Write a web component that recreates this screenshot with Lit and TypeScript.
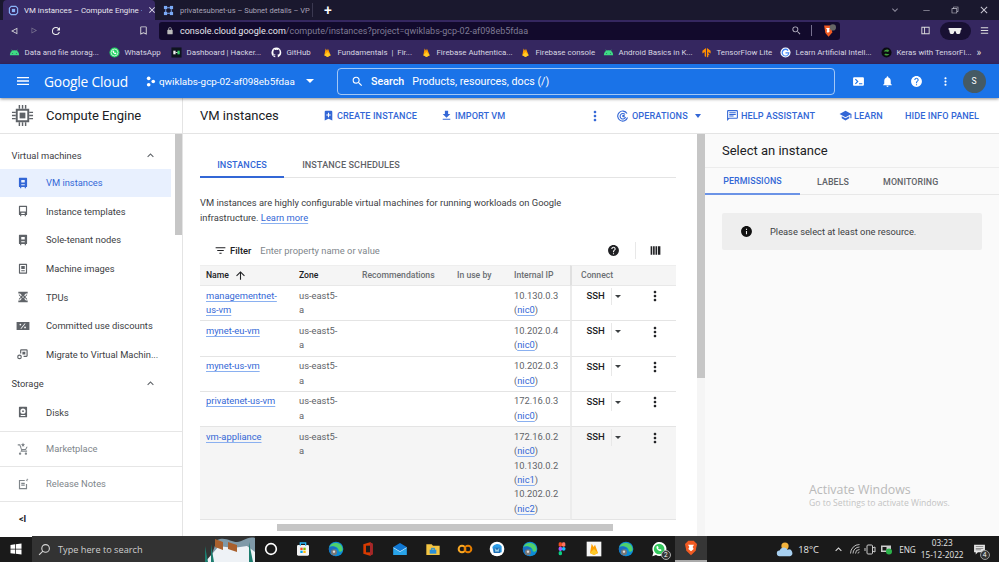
import { LitElement, html, css, svg } from "lit";
import { customElement } from "lit/decorators.js";

const ic = (d: string, size = 12, color = "currentColor", vb = "0 0 24 24") =>
  html`<svg class="ic" width=${size} height=${size} viewBox=${vb} fill=${color}><path d=${d}></path></svg>`;

const P = {
  menu: "M3 18h18v-2H3v2zm0-5h18v-2H3v2zm0-7v2h18V6H3z",
  search: "M15.5 14h-.79l-.28-.27A6.47 6.47 0 0 0 16 9.5 6.5 6.5 0 1 0 9.5 16c1.61 0 3.09-.59 4.23-1.57l.27.28v.79l5 4.99L20.49 19l-4.99-5zm-6 0C7.01 14 5 11.99 5 9.5S7.01 5 9.5 5 14 7.01 14 9.5 11.99 14 9.5 14z",
  bell: "M12 22c1.1 0 2-.9 2-2h-4c0 1.1.9 2 2 2zm6-6v-5c0-3.07-1.63-5.64-4.5-6.32V4c0-.83-.67-1.5-1.5-1.5s-1.5.67-1.5 1.5v.68C7.64 5.36 6 7.92 6 11v5l-2 2v1h16v-1l-2-2z",
  help: "M12 2C6.48 2 2 6.48 2 12s4.48 10 10 10 10-4.48 10-10S17.52 2 12 2zm1 17h-2v-2h2v2zm2.07-7.75-.9.92C13.45 12.9 13 13.5 13 15h-2v-.5c0-1.1.45-2.1 1.17-2.83l1.24-1.26c.37-.36.59-.86.59-1.41 0-1.1-.9-2-2-2s-2 .9-2 2H8c0-2.21 1.79-4 4-4s4 1.79 4 4c0 .88-.36 1.68-.93 2.25z",
  dots: "M12 8c1.1 0 2-.9 2-2s-.9-2-2-2-2 .9-2 2 .9 2 2 2zm0 2c-1.1 0-2 .9-2 2s.9 2 2 2 2-.9 2-2-.9-2-2-2zm0 6c-1.1 0-2 .9-2 2s.9 2 2 2 2-.9 2-2-.9-2-2-2z",
  term: "M20 4H4a2 2 0 0 0-2 2v12c0 1.1.9 2 2 2h16a2 2 0 0 0 2-2V6a2 2 0 0 0-2-2zM5.5 8.5 7 7l5 5-5 5-1.5-1.5L9 12 5.5 8.5zM19 17h-6v-2h6v2z",
  create: "M17 3H7a2 2 0 0 0-2 2v16l7-3 7 3V5a2 2 0 0 0-2-2zm-1 9h-3v3h-2v-3H8v-2h3V7h2v3h3v2z",
  importI: "M5 20h14v-2H5v2zM19 9h-4V3H9v6H5l7 7 7-7z",
  chat: "M20 2H4a2 2 0 0 0-2 2v18l4-4h14a2 2 0 0 0 2-2V4a2 2 0 0 0-2-2zm0 14H5.2L4 17.2V4h16v12zM6 12h8v2H6zm0-3h12v2H6zm0-3h12v2H6z",
  school: "M5 13.18v4L12 21l7-3.82v-4L12 17l-7-3.82zM12 3 1 9l11 6 9-4.91V17h2V9L12 3z",
  filter: "M3 6h18v2H3zm3 5h12v2H6zm4 5h4v2h-4z",
  up: "M4 12l1.41 1.41L11 7.83V20h2V7.83l5.58 5.59L20 12l-8-8-8 8z",
  columns: "M3 4h3v16H3zm4.5 0h3v16h-3zm4.5 0h3v16h-3zm4.5 0H21v16h-4.5z",
  info: "M12 2C6.48 2 2 6.48 2 12s4.48 10 10 10 10-4.48 10-10S17.52 2 12 2zm1 15h-2v-6h2v6zm0-8h-2V7h2v2z",
  server: "M6 3h12a1 1 0 0 1 1 1v14a1 1 0 0 1-1 1h-1v2h-2v-2H9v2H7v-2H6a1 1 0 0 1-1-1V4a1 1 0 0 1 1-1zm3 4v4h6V7H9zm0 7v2h6v-2H9z",
  template: "M6 3h12a1 1 0 0 1 1 1v14a1 1 0 0 1-1 1h-1v2h-2v-2H9v2H7v-2H6a1 1 0 0 1-1-1V4a1 1 0 0 1 1-1zm1 2v8h10V5H7zm2 10v2h6v-2H9z",
  image: "M6 3h12a1 1 0 0 1 1 1v15a1 1 0 0 1-1 1H6a1 1 0 0 1-1-1V4a1 1 0 0 1 1-1zm1 2v13h10V5H7zm2 2h6v5H9V7zm0 7h6v2H9v-2z",
  tpu: "M4 3h16v3h-3l-3 3 1.500 1.500L19 7v2l-3 3 3 3v2l-3.500-3.500L14 15l3 3h3v3H4v-3h3l3-3-1.500-1.500L5 17v-2l3-3-3-3V7l3.500 3.500L10 9 7 6H4zm8 7.500L10.500 12l1.500 1.500 1.500-1.500z",
  pct: "M1 5h22v14H1V5zm6.500 3A1.500 1.500 0 1 0 7.500 11 1.500 1.500 0 0 0 7.500 8zm7.300-.5L7.500 16.500h1.700l7.300-9h-1.700zM15.500 13a1.500 1.500 0 1 0 0 3 1.500 1.500 0 0 0 0-3z",
  migrate: "M9 4h9a2 2 0 0 1 2 2v9a2 2 0 0 1-2 2h-5v-2h5V6H9v5H7V6a2 2 0 0 1 2-2zm2 4h5v5h-5V8zM6 13a4 4 0 1 1 0 8 4 4 0 0 1 0-8zm0 2a2 2 0 1 0 0 4 2 2 0 0 0 0-4z",
  disk: "M6 3h12a1 1 0 0 1 1 1v16a1 1 0 0 1-1 1H6a1 1 0 0 1-1-1V4a1 1 0 0 1 1-1zm6 3a4.500 4.500 0 1 0 0 9 4.500 4.500 0 0 0 0-9zm0 3a1.500 1.500 0 1 1 0 3 1.500 1.500 0 0 1 0-3zM8 17v2h8v-2H8z",
  cart: "M7 18c-1.100 0-2 .9-2 2s.9 2 2 2 2-.9 2-2-.9-2-2-2zm10 0c-1.100 0-2 .9-2 2s.9 2 2 2 2-.9 2-2-.9-2-2-2zM3 6h3l3 8-1.500 2.500H19v-1.800H10.500l.6-1H17L20 8h-2l-2 3.900H10L7.200 4H3zm9-5 1 2.500 2.500.3-1.900 1.700.6 2.500L12 6.800 9.800 8l.6-2.500L8.500 3.800l2.500-.3L12 1z",
  notes: "M5 5h10v2H7v12h10v-7h2v9H5V5zm4 5h6v2H9v-2zm0 3h6v2H9v-2zm10-11 .8 1.700 1.700.8-1.700.8L19 8l-.8-1.700-1.700-.8 1.700-.8L19 2z",
  chevUp: "M7.41 15.41 12 10.83l4.59 4.58L18 14l-6-6-6 6z",
};

const navItems: [string, string, boolean?][] = [
  ["VM instances", P.server, true],
  ["Instance templates", P.template],
  ["Sole-tenant nodes", P.server],
  ["Machine images", P.image],
  ["TPUs", P.tpu],
  ["Committed use discounts", P.pct],
  ["Migrate to Virtual Machin...", P.migrate],
];

const rows: { n: string[]; hl?: boolean; ips: string[][] }[] = [
  { n: ["managementnet-", "us-vm"], ips: [["10.130.0.3", "nic0"]] },
  { n: ["mynet-eu-vm"], ips: [["10.202.0.4", "nic0"]] },
  { n: ["mynet-us-vm"], ips: [["10.202.0.3", "nic0"]] },
  { n: ["privatenet-us-vm"], ips: [["172.16.0.3", "nic0"]] },
  { n: ["vm-appliance"], hl: true, ips: [["172.16.0.2", "nic0"], ["10.130.0.2", "nic1"], ["10.202.0.2", "nic2"]] },
];

const android = svg`<path fill="#3ddc84" d="M2 17a10 10 0 0 1 20 0v1H2z"/><path stroke="#3ddc84" stroke-width="1.500" d="M6 6l2.500 4M18 6l-2.500 4"/><circle cx="8" cy="14" r="1" fill="#352760"/><circle cx="16" cy="14" r="1" fill="#352760"/>`;
const fire = svg`<path fill="#ffa000" d="M5 18 8 3l3 5 2-4 6 14-7 4z"/><path fill="#ffca28" d="M5 18 12 11l7 7-7 4z"/>`;

const bookmarks: [any, string, number][] = [
  [android, "Data and file storag...", 100],
  [svg`<circle cx="12" cy="12" r="11" fill="#25d366"/><circle cx="12" cy="12" r="7.500" fill="none" stroke="#fff" stroke-width="1.500"/><path fill="#fff" d="M8.500 7.500c-1.500 1.500-.8 4 1.500 6s4.500 2.800 6 1.200l-.4-1.700-2-.8-.8.8c-.8-.4-1.500-1.100-1.900-1.900l.8-.8-.8-2.300z"/>`, "WhatsApp", 62],
  [svg`<rect x="1" y="1" width="22" height="22" fill="#0e141e"/><rect x="5" y="8" width="5" height="8" fill="#eee"/><rect x="14" y="8" width="5" height="8" fill="#39d26b"/><rect x="10" y="11" width="4" height="2" fill="#eee"/>`, "Dashboard | Hacker...", 100],
  [svg`<path fill="#fff" d="M12 1a11 11 0 0 0-3.500 21.400c.5.100.8-.2.8-.5v-2.200c-3 .7-3.700-1.300-3.700-1.300-.5-1.300-1.200-1.600-1.200-1.600-1-.7.100-.7.100-.7 1.100.1 1.700 1.100 1.700 1.100 1 1.700 2.500 1.200 3.200.9.100-.7.400-1.200.7-1.500-2.400-.3-5-1.200-5-5.400 0-1.200.4-2.200 1.100-3-.1-.3-.5-1.400.1-2.900 0 0 .9-.3 3 1.100a10.300 10.300 0 0 1 5.500 0c2.100-1.400 3-1.100 3-1.100.6 1.500.2 2.600.1 2.900.7.800 1.100 1.800 1.100 3 0 4.200-2.600 5.100-5 5.400.4.300.8 1 .8 2v3c0 .3.2.6.8.5A11 11 0 0 0 12 1z"/>`, "GitHub", 51],
  [fire, "Fundamentals  |  Fir...", 99],
  [fire, "Firebase Authentica...", 99],
  [fire, "Firebase console", 83],
  [android, "Android Basics in K...", 98],
  [svg`<path fill="#ff8f00" d="M11 2v20l-3-2V11L3 14V8zM13 2l8 6v6l-5-3v3l2 1v3l-2-1v4l-3 2z"/>`, "TensorFlow Lite", 79],
  [svg`<circle cx="12" cy="12" r="11" fill="#fff"/><path fill="#4285f4" d="M17 9a6 6 0 1 0 1 5h-6v-2.500h8.500A8.500 8.500 0 1 1 18.500 6.500z"/>`, "Learn Artificial Intell...", 101],
  [svg`<circle cx="12" cy="12" r="11" fill="#0b0b12"/><path fill="#3f9d3a" d="M6 10c3-6 10-6 12-2l-3 3c-2-1-5-1-9-1zm12 5c-3 5-9 4-11 2l3-3c2 1 4 1 8 1z"/>`, "Keras with TensorFl...", 96],
];

const edge = (c: string) => svg`<circle cx="12" cy="12" r="11" fill="#0c8bd6"/><path d="M2 9a10.500 10.500 0 0 1 20 3.500c0 3.500-3.500 4.500-6 3 1-5.500-7-9.500-14-6.500z" fill="#4fd16c"/><path d="M2 9.500C6 7 12 8 14 12c-3-1-6 1-6 5 0 2 1 4 3 6C5 22 0 15 2 9.500z" fill="#1b6fc2"/><circle cx="9" cy="17" r="4.500" fill=${c}/><circle cx="9" cy="16" r="1.800" fill="#ddd"/>`;

const tb: any[] = [
  svg`<circle cx="12" cy="12" r="8" fill="none" stroke="#fff" stroke-width="2.500"/>`,
  svg`<rect x="3" y="6" width="18" height="16" rx="2" fill="#f3f3f3"/><path d="M8 7V3h8v4" fill="none" stroke="#29b6f6" stroke-width="2"/><rect x="8" y="10" width="3.500" height="3.500" fill="#f25022"/><rect x="12.500" y="10" width="3.500" height="3.500" fill="#7fba00"/><rect x="8" y="14.500" width="3.500" height="3.500" fill="#00a4ef"/><rect x="12.500" y="14.500" width="3.500" height="3.500" fill="#ffb900"/>`,
  edge("#777"),
  svg`<path d="M5 5 15 2l4 2v16l-4 2-10-3z" fill="#d83b01"/><path d="M9 7h6v10H9z" fill="#1c1c1c"/><path d="M15 2l4 2v16l-4 2z" fill="#a4262c"/>`,
  svg`<path d="M2 9 12 3l10 6v12H2z" fill="#0f78d4"/><path d="M2 10l10 6 10-6v11H2z" fill="#29a4e8"/><path d="M2 9.500l10 6 10-6v1l-10 6-10-6z" fill="#d5eefc"/>`,
  svg`<path d="M2 5h8l2 2h10v14H2z" fill="#f4c542"/><rect x="7" y="13" width="10" height="6" fill="#2a8fd8"/><rect x="10" y="11" width="4" height="3" fill="none" stroke="#2a8fd8" stroke-width="1.500"/>`,
  svg`<circle cx="7.500" cy="12" r="5" fill="none" stroke="#f9a825" stroke-width="3"/><circle cx="16.500" cy="12" r="5" fill="none" stroke="#e67e00" stroke-width="3"/>`,
  svg`<circle cx="12" cy="12" r="11" fill="#fff"/><path d="M5 9a8 8 0 0 1 14-1v9H7z" fill="#2e9ee8"/><path d="M7 10h10v8H7z" fill="#1f6fb5"/><path d="M9 11l1.500 5 1.500-3 1.500 3 1.500-5" fill="none" stroke="#dff" stroke-width="1"/>`,
  edge("#777"),
  svg`<rect x="7" y="2" width="5" height="6.500" rx="2.200" fill="#f24e1e"/><rect x="12" y="2" width="5" height="6.500" rx="2.200" fill="#ff7262"/><rect x="7" y="8.500" width="5" height="6.500" rx="2.200" fill="#a259ff"/><circle cx="14.500" cy="11.700" r="2.800" fill="#1abcfe"/><rect x="7" y="15" width="5" height="6.500" rx="2.500" fill="#0acf83"/>`,
  svg`<rect x="1" y="1" width="22" height="22" fill="#f6f6f6"/><path fill="#ffa000" d="M6 18 8.500 4l3 5 2-3.500L18 18l-6 3z"/><path fill="#ffca28" d="M6 18 12 12l6 6-6 3z"/>`,
  edge("#777"),
  svg`<path d="M2 23l1.600-5.800A10.500 10.500 0 1 1 7.500 21z" fill="#fff"/><circle cx="12.200" cy="12" r="8" fill="#35c95e"/><path fill="#fff" d="M9 7.500c-1.500 1.500-.8 4 1 5.800s4.300 2.500 5.700 1l-.4-1.600-2-.8-.8.8c-.8-.4-1.500-1.100-1.900-1.900l.8-.8-.8-2z"/>`,
  svg`<path d="M5 4l3-3h8l3 3 2 2-2 10-7 7-7-7-2-10z" fill="#f15a22"/><path d="M7.500 7h9l-2 3.500 1.500 3-4 3.500-4-3.500 1.500-3z" fill="#fff"/>`,
];

@customElement("app-root")
export class AppRoot extends LitElement {
  static styles = css`
    :host { display: block; width: 999px; height: 562px; overflow: hidden; position: relative; font-family: Roboto, "Liberation Sans", sans-serif; font-size: 9.35px; color: #3c4043; }
    * { box-sizing: border-box; }
    .ic { display: block; flex: none; }
    .page { height: 562px; display: flex; flex-direction: column; }

    .tabstrip { height: 20px; background: #1a182e; display: flex; padding-left: 3px; align-items: stretch; color: #e8e6f0; }
    .tab { width: 152px; background: #382a66; border-radius: 4px 4px 0 0; display: flex; align-items: center; gap: 5px; padding: 0 0 0 5px; font-size: 7.9px; white-space: nowrap; overflow: hidden; }
    .tab .t { width: 118px; flex: none; overflow: hidden; }
    .tab.off { width: 158px; background: transparent; color: #a8a3b8; border-right: 1px solid #3a3850; margin: 3px 0; padding-left: 8px; gap: 6px; border-radius: 0; font-size: 7.5px; }
    .tab.off .t { width: 132px; }
    .fav { width: 11px; height: 11px; flex: none; }
    .plus { width: 30px; font-size: 14px; color: #fff; display: flex; align-items: center; justify-content: center; font-weight: 500; }
    .winctl { margin-left: auto; display: flex; align-items: center; gap: 18px; padding-right: 9px; color: #c9c7d3; }
    .winctl .first { margin-right: 2px; }

    .toolbar { height: 21px; background: #352760; display: flex; align-items: center; color: #ddd; }
    .navbtns { width: 159px; display: flex; align-items: center; padding-left: 9px; gap: 11px; }
    .bmgap { width: 54px; }
    .url { width: 681px; height: 18px; background: #120a2c; border-radius: 3px; display: flex; align-items: center; padding: 0 3px 0 7px; font-size: 9px; color: #7f7b94; white-space: nowrap; }
    .url b { font-weight: 400; color: #e8e8ee; margin-left: 6px; }
    .url .end { margin-left: auto; display: flex; align-items: center; gap: 5px; padding-right: 1px; }
    .urlsep { width: 1px; height: 11px; background: #77708f; margin: 0 4px; }
    .tr { margin-left: 80px; display: flex; align-items: center; gap: 8.5px; }
    .pill { width: 31px; height: 18px; background: #181033; border-radius: 9px; display: flex; align-items: center; justify-content: center; }

    .bookmarks { height: 23px; background: #352760; display: flex; align-items: center; padding-left: 8.5px; color: #d8d6e2; font-size: 7.9px; white-space: pre; }
    .bm { display: flex; align-items: center; gap: 5px; flex: none; overflow: hidden; }
    .more { margin-left: 0; color: #ddd; font-size: 10px; }

    .gbar { height: 34px; background: #1a73e8; display: flex; align-items: center; color: #fff; box-shadow: 0 1px 3px rgba(0,0,0,.45); position: relative; z-index: 2; }
    .hamb { margin-left: 15px; width: 16px; }
    .logo { font-family: "Open Sans", Roboto, sans-serif; font-size: 13.8px; margin-left: 13px; width: 101px; letter-spacing: -0.2px; white-space: nowrap; }
    .proj { display: flex; align-items: center; gap: 3px; font-size: 9.9px; width: 192px; white-space: nowrap; }
    .caret { width: 0; height: 0; border-left: 4px solid transparent; border-right: 4px solid transparent; border-top: 4px solid currentColor; }
    .pcaret { margin-left: 8px; }
    .searchbox { width: 498px; height: 27px; border: 1px solid rgba(255,255,255,.6); border-radius: 4px; display: flex; align-items: center; padding-left: 13px; font-size: 10.7px; }
    .searchbox b { font-weight: 500; margin: 0 8px 0 7px; }
    .gicons { margin-left: 16.5px; display: flex; align-items: center; gap: 16px; }
    .avatar { width: 23px; height: 23px; border-radius: 50%; background: #455a64; display: flex; align-items: center; justify-content: center; font-size: 8.5px; margin-left: -5px; }

    .sub { height: 36px; display: flex; background: #fff; border-bottom: 1px solid #e4e4e4; }
    .sub-l { width: 183px; display: flex; align-items: center; border-right: 1px solid #e4e4e4; padding-left: 11px; gap: 12px; font-size: 13px; color: #202124; }
    .sub-r { flex: 1; display: flex; align-items: center; padding-left: 17px; }
    .sub-r h1 { margin: 0; font-size: 13px; font-weight: 400; color: #202124; width: 122px; white-space: nowrap; }
    .act { display: flex; align-items: center; gap: 2px; color: #3367d6; font-weight: 500; font-size: 9.1px; white-space: nowrap; letter-spacing: .1px; flex: none; }
    .a1 { width: 118px; } .a2 { width: 146px; } .a3 { width: 31px; padding-left: 1px; } .a4 { width: 109px; gap: 3px; } .a5 { width: 113px; } .a6 { width: 66px; }
    .lift { margin-top: 1px; }
    .ml { margin-left: 4px; border-left-width: 3px; border-right-width: 3px; }

    .main { height: 402px; display: flex; background: #fff; }
    .side { width: 183px; display: flex; border-right: 1px solid #e4e4e4; flex: none; }
    .side-in { flex: 1; display: flex; flex-direction: column; min-width: 0; }
    .sbar { width: 7px; flex: none; background: #fff; }
    .thumb { background: #c6c6c6; }
    .sbar .thumb { height: 101px; }
    .sec { height: 14px; margin-top: 14px; display: flex; align-items: center; justify-content: space-between; padding: 0 18px 0 11.5px; color: #3c4043; flex: none; }
    .sec.s2 { margin-top: 8.3px; }
    .nav { height: 28.6px; display: flex; align-items: center; padding-left: 16px; gap: 16px; color: #3c4043; white-space: nowrap; flex: none; }
    .nav.on { background: #e8f0fe; color: #3367d6; margin-right: 4px; }
    .nav .ic { color: #5f6368; }
    .nav.on .ic { color: #3367d6; }
    .navlist { margin-top: 6.5px; display: flex; flex-direction: column; }
    .disks { margin-top: 7px; }
    .foot { display: flex; flex-direction: column; margin-right: -7px; border-top: 1px solid #e6e6e6; margin-top: 4.4px; position: relative; background: #fff; }
    .foot .nav { height: 35px; border-bottom: 1px solid #e6e6e6; color: #80868b; }
    .foot .nav .ic { color: #80868b; }
    .collapse { height: 35px; display: flex; align-items: center; padding-left: 19px; font-size: 9px; color: #202124; font-weight: 700; }

    .content { width: 522px; display: flex; flex: none; }
    .pane { flex: 1; min-width: 0; padding: 22px 0 0 17px; display: flex; flex-direction: column; overflow: hidden; }
    .tabs { display: flex; height: 22px; border-bottom: 1px solid #e4e4e4; font-weight: 500; font-size: 9.1px; color: #5f6368; width: 476px; letter-spacing: .1px; flex: none; }
    .tabs span { display: flex; align-items: flex-start; justify-content: center; padding-top: 4px; height: 22px; white-space: nowrap; }
    .tabs .on { color: #3367d6; border-bottom: 2px solid #3367d6; width: 84px; }
    .tabs .o2 { margin-left: 18px; width: 98px; }
    .desc { margin: 18px 0 0; line-height: 14.5px; color: #3c4043; width: 380px; flex: none; }
    a { color: #3367d6; text-decoration: underline; text-decoration-color: #8ab0f0; text-underline-offset: 1.5px; }
    .filter { height: 26px; width: 476px; margin: 12px 0 2px; display: flex; align-items: center; padding-left: 13.5px; color: #80868b; flex: none; }
    .filter .lbl { color: #202124; font-weight: 500; margin: 0 9px 0 3.5px; }
    .filter .h { margin-left: auto; }
    .filter .dv { width: 1px; height: 17px; background: #e8e8e8; margin: 0 13px 0 15px; }
    .filter .c { margin-right: 14px; }
    .grid { display: grid; grid-template-columns: 93px 63px 95px 57px 62px 106px; width: 476px; line-height: 14.4px; color: #5f6368; flex: none; }
    .hd { height: 21px; background: #f5f5f5; border-bottom: 1px solid #e8e8e8; display: flex; align-items: center; padding-left: 6px; font-weight: 500; color: #6b6f73; white-space: nowrap; font-size: 8.65px; border-top: 1px solid #eee; }
    .hd.dk { color: #202124; }
    .hd.cn { border-left: 2px solid #e0e0e0; padding-left: 9px; }
    .sortic { margin-left: 5px; }
    .cell { padding: 2.5px 0 3px 6px; border-bottom: 1px solid #e4e4e4; min-width: 0; white-space: nowrap; overflow: hidden; }
    .cell.hl { background: #f5f5f5; }
    .cell.z { white-space: normal; }
    .conn { border-left: 2px solid #ececec; padding: 1.5px 0 0 0; color: #202124; }
    .conn-in { display: flex; align-items: center; height: 17.5px; }
    .ssh { margin-left: 14.5px; width: 20px; font-weight: 500; font-size: 9.5px; }
    .arrow { margin-left: 4px; border-left: 1px solid #e8e8e8; height: 17.5px; width: 26px; display: flex; align-items: center; padding-left: 3px; color: #3c4043; }
    .arrow .caret { border-left-width: 3px; border-right-width: 3px; border-top-width: 3px; }
    .kebab { margin-left: 10px; color: #202124; }
    .hscroll { height: 7px; margin: 4px 0 0 77px; width: 336px; background: #c6c6c6; flex: none; }
    .vbar { width: 8px; background: #f5f5f5; flex: none; }
    .vbar .thumb { height: 244px; }
    .info { flex: 1; background: #fafafa; display: flex; flex-direction: column; position: relative; }
    .ititle { height: 34px; border-bottom: 1px solid #ececec; display: flex; align-items: center; padding-left: 17px; font-size: 13px; color: #202124; }
    .itabs { display: flex; height: 27px; border-bottom: 1px solid #e8e8e8; font-weight: 500; font-size: 8.85px; color: #5f6368; letter-spacing: .1px; }
    .itabs span { display: flex; align-items: center; justify-content: center; height: 27px; white-space: nowrap; }
    .itabs .on { width: 95px; color: #3367d6; border-bottom: 2px solid #6b93e6; margin-right: 17px; }
    .itabs .l { margin-right: 34px; }
    .notice { margin: 18px 17px 0; height: 37px; background: #eeeeee; border-radius: 2px; display: flex; align-items: center; padding-left: 18px; gap: 17px; color: #3c4043; font-size: 9.3px; }

    .taskbar { height: 26px; background: #1a1a1a; display: flex; align-items: center; color: #e6e6e6; }
    .win { width: 32px; display: flex; justify-content: center; flex: none; }
    .tsearch { width: 223px; height: 26px; background: #333; display: flex; align-items: center; padding-left: 6px; gap: 7px; font-size: 9.2px; color: #cfcfcf; font-family: "Open Sans", Roboto, sans-serif; position: relative; overflow: hidden; flex: none; }
    .scene { position: absolute; right: 0; top: 0; }
    .apps { display: flex; align-items: center; flex: none; }
    .app { width: 32.3px; height: 26px; display: flex; align-items: center; justify-content: center; position: relative; flex: none; }
    .app.cur { background: #363636; border-bottom: 2px solid #aaa; }
    .badge { position: absolute; right: 4px; bottom: 2px; width: 10px; height: 10px; border-radius: 50%; background: #333; border: 1px solid #aaa; color: #fff; font-size: 6.5px; display: flex; align-items: center; justify-content: center; }
    .tray { display: flex; align-items: center; font-size: 9.4px; flex: none; font-family: "Open Sans", Roboto, sans-serif; }
    .cloud { margin-left: 69px; }
    .tc { margin-left: 4px; width: 20px; white-space: nowrap; }
    .chev { margin-left: 13.5px; }
    .t1 { margin-left: 4px; } .t2 { margin-left: 3px; } .t3 { margin-left: 4px; }
    .eng { margin-left: 6.5px; width: 18px; font-size: 8.2px; }
    .clock { text-align: center; line-height: 12px; font-size: 8.2px; margin-left: 1px; width: 48px; white-space: nowrap; }
    .note { margin-left: 6.5px; position: relative; width: 13px; height: 13px; }
    .note span { position: absolute; right: -4px; bottom: -4px; width: 10px; height: 10px; border-radius: 50%; background: #333; border: 1px solid #999; color: #fff; font-size: 6.5px; display: flex; align-items: center; justify-content: center; }
    .watermark { position: absolute; left: 809px; top: 482px; color: #b9b9b9; font-size: 12.4px; line-height: 15px; font-family: "Open Sans", Roboto, sans-serif; }
    .watermark small { display: block; font-size: 8.6px; line-height: 12px; color: #c3c3c3; }
  `;

  render() {
    const x = "M19 6.41 17.59 5 12 10.59 6.41 5 5 6.41 10.59 12 5 17.59 6.41 19 12 13.41 17.59 19 19 17.59 13.41 12z";
    return html`
      <div class="page">
        <div class="tabstrip">
          <div class="tab">
            <svg class="fav" viewBox="0 0 24 24"><path fill="none" stroke="#8ab4f8" stroke-width="2.5" d="M7 3h10l4 4v10l-4 4H7l-4-4V7z"/><rect x="8.500" y="8.500" width="7" height="7" fill="#8ab4f8"/></svg>
            <span class="t">VM instances – Compute Engine –</span>
            ${ic(x, 10, "#e8e6f0")}
          </div>
          <div class="tab off">
            <svg class="fav" viewBox="0 0 24 24"><g fill="#7baaf7"><rect x="2" y="2" width="7" height="7"/><rect x="15" y="2" width="7" height="7"/><rect x="2" y="15" width="7" height="7"/><rect x="15" y="15" width="7" height="7"/><path d="M9 5h6v2H9zM9 17h6v2H9zM5 9h2v6H5zM17 9h2v6h-2z"/></g></svg>
            <span class="t">privatesubnet-us – Subnet details – VP</span>
          </div>
          <div class="plus">+</div>
          <div class="winctl">
            <span class="first">${ic("M7.41 8.59 12 13.17l4.59-4.58L18 10l-6 6-6-6z", 12, "#8d8a9c")}</span>
            ${ic("M5 11.5h14v1.200H5z", 11)}
            ${ic("M8 4h12v12h-3v4H4V8h4V4zm1.500 1.500V8H17v6.500h1.500v-9h-9zM5.500 9.500v9h10v-9h-10z", 10)}
            ${ic(x, 12)}
          </div>
        </div>

        <div class="toolbar">
          <div class="navbtns">
            ${ic("M20 4 5 12l15 8V4zm-2 3.300v9.400L9.300 12 18 7.300z", 10, "#ddd")}
            ${ic("M4 4l15 8-15 8V4zm2 3.300v9.400l8.700-4.700L6 7.300z", 9, "#77708f")}
            ${ic("M17.65 6.35A7.96 7.96 0 0 0 12 4a8 8 0 1 0 7.73 10h-2.08A6 6 0 1 1 12 6c1.66 0 3.14.69 4.22 1.78L13 11h7V4l-2.35 2.35z", 12, "#eee")}
            <span class="bmgap"></span>
            ${ic("M17 3H7a2 2 0 0 0-2 2v16l7-3 7 3V5a2 2 0 0 0-2-2zm0 15-5-2.180L7 18V5h10v13z", 11, "#ddd")}
          </div>
          <div class="url">
            ${ic("M18 8h-1V6a5 5 0 0 0-10 0v2H6a2 2 0 0 0-2 2v10c0 1.100.9 2 2 2h12a2 2 0 0 0 2-2V10a2 2 0 0 0-2-2zM9 8V6a3 3 0 0 1 6 0v2H9z", 8, "#bbb")}
            <b>console.cloud.google.com</b><span>/compute/instances?project=qwiklabs-gcp-02-af098eb5fdaa</span>
            <div class="end">
              ${ic(P.search, 11, "#b9b6c5")}
              <span class="urlsep"></span>
              <svg class="ic" width="15" height="15" viewBox="0 0 24 24"><path fill="#f15a22" d="M5 4h10l2 2 1 9-6 7-5-6z"/><path fill="#fff" d="M8 8h6l-1 3 1 2-3 3-2-3 1-2z"/><circle cx="19" cy="7" r="5" fill="#666"/></svg>
            </div>
          </div>
          <div class="tr">
            ${ic("M3 4h18v16H3V4zm2 2v12h4V6H5zm6 0v12h8V6h-8z", 11, "#ddd")}
            <div class="pill"><svg width="14" height="8" viewBox="0 0 24 12"><path fill="#eee" d="M1 1h22v3h-1l-1 5c-.3 1-1 2-2 2h-3c-1 0-2-1-2.500-3l-1-2h-1l-1 2C10 10 9 11 8 11H5c-1 0-1.700-1-2-2L2 4H1z"/></svg></div>
            ${ic("M4 5h16v2H4zm0 6h16v2H4zm0 6h16v2H4z", 11, "#ddd")}
          </div>
        </div>

        <div class="bookmarks">
          ${bookmarks.map(([g, t, w]) => html`<div class="bm" style="width:${w}px"><svg class="ic" width="11" height="11" viewBox="0 0 24 24">${g}</svg><span>${t}</span></div>`)}
          <span class="more">»</span>
        </div>

        <div class="gbar">
          <div class="hamb">${ic(P.menu, 16)}</div>
          <div class="logo">Google Cloud</div>
          <div class="proj">
            <svg width="11" height="11" viewBox="0 0 24 24" fill="#fff"><circle cx="8" cy="5" r="4"/><circle cx="8" cy="19" r="4"/><circle cx="18" cy="12" r="4"/></svg>
            <span>qwiklabs-gcp-02-af098eb5fdaa</span>
            <span class="caret pcaret"></span>
          </div>
          <div class="searchbox">
            ${ic(P.search, 13, "#fff")}
            <b>Search</b><span>Products, resources, docs (/)</span>
          </div>
          <div class="gicons">
            ${ic(P.term, 13)}
            ${ic(P.bell, 13)}
            ${ic(P.help, 13)}
            ${ic(P.dots, 13)}
            <div class="avatar">S</div>
          </div>
        </div>

        <div class="sub">
          <div class="sub-l">
            <svg class="ic" width="23" height="23" viewBox="0 0 24 24" fill="#5f6368"><path d="M6 6h12v12H6z" fill="none" stroke="#5f6368" stroke-width="2"/><rect x="9" y="9" width="6" height="6"/><path d="M1 8h4v1.500H1zm0 3.300h4v1.500H1zm0 3.200h4V16H1zM19 8h4v1.500h-4zm0 3.300h4v1.500h-4zm0 3.200h4V16h-4zM8 1h1.500v4H8zm3.300 0h1.500v4h-1.500zm3.200 0H16v4h-1.500zM8 19h1.500v4H8zm3.300 0h1.500v4h-1.500zm3.200 0H16v4h-1.500z"/></svg>
            <span>Compute Engine</span>
          </div>
          <div class="sub-r">
            <h1>VM instances</h1>
            <div class="act a1">${ic(P.create, 13)}CREATE INSTANCE</div>
            <div class="act a2">${ic(P.importI, 13)}IMPORT VM</div>
            <div class="act a3">${ic(P.dots, 16)}</div>
            <div class="act a4">
              <svg class="ic" width="12" height="12" viewBox="0 0 24 24" fill="none" stroke="currentColor" stroke-width="2.200"><path d="M20 7a10 10 0 1 0 1 8"/><path d="M16 9a5.500 5.500 0 1 0 1 5"/><circle cx="13" cy="12" r="1.500" fill="currentColor"/></svg>
              OPERATIONS <span class="caret ml"></span>
            </div>
            <div class="act a5">${ic(P.chat, 13)}HELP ASSISTANT</div>
            <div class="act a6">${ic(P.school, 13)}<span class="lift">LEARN</span></div>
            <div class="act">HIDE INFO PANEL</div>
          </div>
        </div>

        <div class="main">
          <div class="side">
            <div class="side-in">
              <div class="sec"><span>Virtual machines</span>${ic(P.chevUp, 13, "#5f6368")}</div>
              <div class="navlist">
                ${navItems.map(([t, p, on]) => html`<div class="nav ${on ? "on" : ""}">${ic(p, 14)}<span>${t}</span></div>`)}
              </div>
              <div class="sec s2"><span>Storage</span>${ic(P.chevUp, 13, "#5f6368")}</div>
              <div class="nav disks">${ic(P.disk, 14)}<span>Disks</span></div>
              <div class="foot">
                <div class="nav">${ic(P.cart, 14)}<span>Marketplace</span></div>
                <div class="nav">${ic(P.notes, 14)}<span>Release Notes</span></div>
                <div class="collapse">&lt;I</div>
              </div>
            </div>
            <div class="sbar"><div class="thumb"></div></div>
          </div>

          <div class="content">
            <div class="pane">
              <div class="tabs"><span class="on">INSTANCES</span><span class="o2">INSTANCE SCHEDULES</span></div>
              <p class="desc">VM instances are highly configurable virtual machines for running workloads on Google infrastructure. <a>Learn more</a></p>
              <div class="filter">
                ${ic(P.filter, 13, "#202124")}
                <span class="lbl">Filter</span>
                <span>Enter property name or value</span>
                <span class="h">${ic(P.help, 13, "#202124")}</span>
                <span class="dv"></span>
                <span class="c">${ic(P.columns, 13, "#202124")}</span>
              </div>
              <div class="grid">
                <div class="hd dk">Name<span class="sortic">${ic(P.up, 13, "#202124")}</span></div>
                <div class="hd dk">Zone</div>
                <div class="hd">Recommendations</div>
                <div class="hd">In use by</div>
                <div class="hd">Internal IP</div>
                <div class="hd cn">Connect</div>
                ${rows.map((r) => {
                  const h = r.hl ? "hl" : "";
                  return html`
                    <div class="cell ${h}">${r.n.map((t) => html`<a>${t}</a><br />`)}</div>
                    <div class="cell z ${h}">us-east5-<br />a</div>
                    <div class="cell ${h}"></div>
                    <div class="cell ${h}"></div>
                    <div class="cell ${h}">${r.ips.map(([ip, nic]) => html`${ip}<br />(<a>${nic}</a>)<br />`)}</div>
                    <div class="conn cell ${h}">
                      <div class="conn-in">
                        <span class="ssh">SSH</span>
                        <span class="arrow"><span class="caret"></span></span>
                        <span class="kebab">${ic(P.dots, 16)}</span>
                      </div>
                    </div>
                  `;
                })}
              </div>
              <div class="hscroll"></div>
            </div>
            <div class="vbar"><div class="thumb"></div></div>
          </div>

          <div class="info">
            <div class="ititle">Select an instance</div>
            <div class="itabs"><span class="on">PERMISSIONS</span><span class="l">LABELS</span><span>MONITORING</span></div>
            <div class="notice">${ic(P.info, 13, "#111")}<span>Please select at least one resource.</span></div>
          </div>
        </div>

        <div class="taskbar">
          <div class="win"><svg width="12" height="12" viewBox="0 0 24 24" fill="#fff"><path d="M1 4l9-1.300V11.500H1zM11.500 2.400 23 1v10.500H11.500zM1 13h9v8.700L1 20.500zM11.500 13H23v10l-11.500-1.500z"/></svg></div>
          <div class="tsearch">
            <svg width="13" height="13" viewBox="0 0 24 24" fill="none" stroke="#d8d8d8" stroke-width="2"><circle cx="14" cy="10" r="7"/><path d="M9 15 2 22"/></svg>
            <span>Type here to search</span>
            <svg class="scene" width="54" height="26" viewBox="0 0 54 26"><path d="M8 26 16 4c8-4 14 2 20 2s10-6 18-4v24z" fill="#7f99a8"/><path d="M4 26 18 10l14 2 14-2 8 6v10z" fill="#eef2f6"/><path d="M14 3l8 3v8l-8-3zM27 6l9 3v7l-9-3z" fill="#a9602d"/><path d="M4 26V10l3 16zM10 26V8l3 18zM48 26V6l4 20z" fill="#1c7d6f"/></svg>
          </div>
          <div class="apps">
            ${tb.map((g, i) => html`<div class="app ${i === 13 ? "cur" : ""}"><svg class="ic" width="16" height="16" viewBox="0 0 24 24">${g}</svg>${i === 12 ? html`<span class="badge">2</span>` : ""}</div>`)}
          </div>
          <div class="tray">
            <svg class="cloud" width="18" height="16" viewBox="0 0 24 22"><circle cx="12" cy="7" r="5" fill="#f2b33d"/><path d="M5 21a4 4 0 0 1-.5-8 6 6 0 0 1 11-1 4.500 4.500 0 0 1 3.500 9z" fill="#a8d0f0"/></svg>
            <span class="tc">18°C</span>
            <span class="chev">${ic(P.chevUp, 13, "#ddd")}</span>
            <svg class="t1" width="12" height="12" viewBox="0 0 24 24" fill="none" stroke="#bbb" stroke-width="2"><path d="M3 21A18 18 0 0 1 21 3M8 21A13 13 0 0 1 21 8M13 21a8 8 0 0 1 8-8M18 21a3 3 0 0 1 3-3"/></svg>
            <svg class="t2" width="12" height="13" viewBox="0 0 24 24" fill="none" stroke="#ccc" stroke-width="2"><rect x="6" y="3" width="11" height="18" rx="2"/><path d="M2 9v6M17 9l5-2v10l-5-2"/></svg>
            <svg class="t3" width="13" height="12" viewBox="0 0 24 24"><rect x="1" y="5" width="20" height="13" fill="#ccc"/><rect x="4" y="8" width="8" height="7" fill="#1a1a1a"/><circle cx="17" cy="17" r="6" fill="#2cb34a"/></svg>
            <span class="eng">ENG</span>
            <div class="clock">03:23<br />15-12-2022</div>
            <div class="note">
              <svg class="ic" width="13" height="13" viewBox="0 0 24 24"><path fill="#e6e6e6" d="M2 3h20v14H9l-4 4v-4H2z"/><path fill="#777" d="M5 6h14v1.500H5zm0 3h14v1.500H5zm0 3h10v1.500H5z"/></svg>
              <span>4</span>
            </div>
          </div>
        </div>
      </div>
      <div class="watermark">Activate Windows<small>Go to Settings to activate Windows.</small></div>
    `;
  }
}
